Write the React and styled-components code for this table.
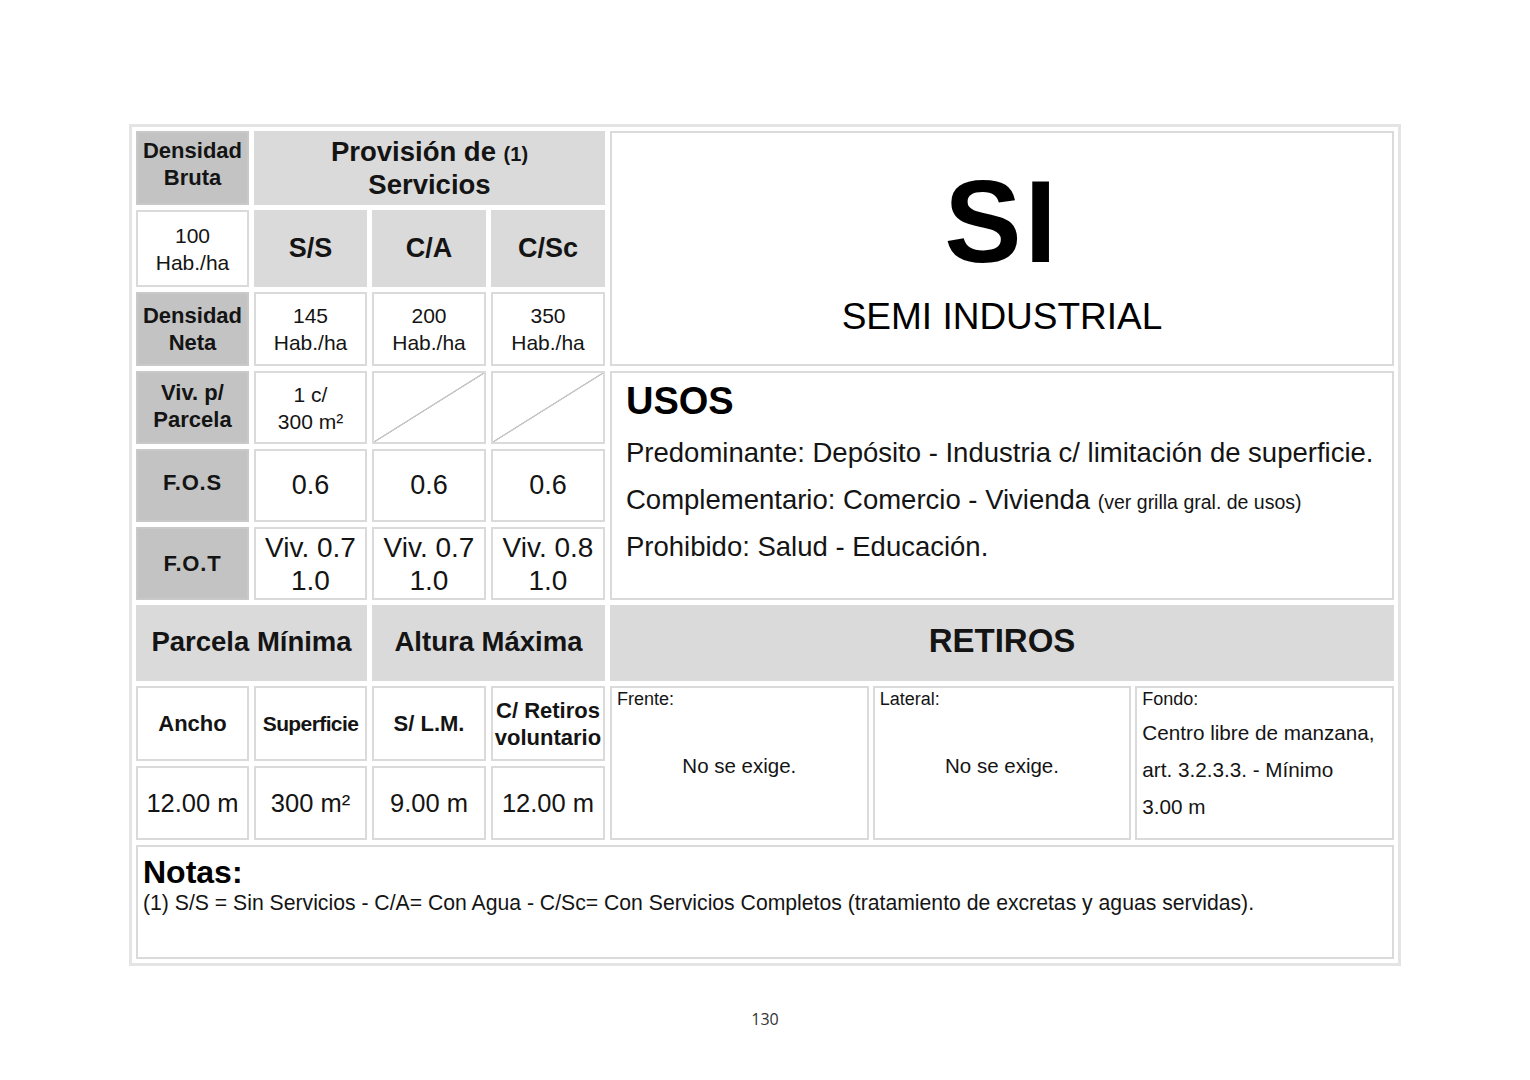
import React from 'react';
import styled, { createGlobalStyle } from 'styled-components';

const GlobalStyle = createGlobalStyle`
  body {
    margin: 0;
    background: #fff;
    font-family: "Liberation Sans", Arial, sans-serif;
    color: #141414;
  }
`

const Page = styled.div`
  width: 1530px;
  height: 1080px;
  padding-top: 124px;
  box-sizing: border-box;
  display: flex;
  flex-direction: column;
  align-items: center;
`

const Frame = styled.div`
  width: 1272px;
  box-sizing: border-box;
  border: 3px solid #e4e4e4;
  padding: 4px;
  display: grid;
  grid-template-columns: 113px 113px 114px 114px 1fr;
  grid-template-rows: 74px 77px 74px 73px 73px 73px 76px 75px 74px 114px;
  gap: 5px;
`

const tones = {
  dark: '#c3c3c3',
  light: '#dadada',
  white: '#ffffff',
}

const Cell = styled.div`
  grid-column: ${p => p.$col || 'auto'};
  grid-row: ${p => p.$row || 'auto'};
  box-sizing: border-box;
  border: 2px solid ${p => (p.$tone === 'dark' ? '#c9c9c9' : '#dadada')};
  background: ${p => tones[p.$tone || 'white']};
  display: flex;
  flex-direction: column;
  align-items: center;
  justify-content: center;
  text-align: center;
  padding-bottom: ${p => p.$lift || 0}px;
  ${p => p.$slash && `
    background: linear-gradient(to bottom right,
      transparent calc(50% - 1px),
      #c6c6c6 calc(50% - 0.5px),
      #c6c6c6 calc(50% + 0.5px),
      transparent calc(50% + 1px));
  `}
`

const Label = styled.div`
  font-weight: bold;
  font-size: ${p => p.$size || 22}px;
  line-height: ${p => p.$lh || 27}px;
  letter-spacing: ${p => p.$spacing || 0}px;
  white-space: nowrap;
`

const Value = styled.div`
  font-size: ${p => p.$size || 21}px;
  line-height: ${p => p.$lh || 27}px;
  white-space: nowrap;
`

const Small = styled.span`
  font-size: ${p => p.$size || 20}px;
  font-weight: ${p => (p.$bold ? 'bold' : 'normal')};
  line-height: 1;
`

const ZoneBox = styled(Cell)`
  padding-top: 6px;
`

const ZoneCode = styled.div`
  font-weight: bold;
  font-size: 116px;
  line-height: 108px;
  letter-spacing: 3px;
  color: #000;
`

const ZoneName = styled.div`
  margin-top: 23px;
  font-size: 37px;
  line-height: 36px;
  color: #000;
`

const UsesBox = styled(Cell)`
  align-items: flex-start;
  justify-content: flex-start;
  text-align: left;
  padding: 8px 14px;
`

const UsesTitle = styled.div`
  font-weight: bold;
  font-size: 38px;
  line-height: 40px;
  color: #000;
`

const UsesList = styled.div`
  margin-top: 8px;
  font-size: 27.5px;
  line-height: 47px;
  white-space: nowrap;
`

const UsesLine = styled.div`
  height: 47px;
`

const RetirosGrid = styled.div`
  grid-column: 5;
  grid-row: 8 / 10;
  display: grid;
  grid-template-columns: repeat(3, 1fr);
  gap: 4px;
`

const RetiroCell = styled.div`
  box-sizing: border-box;
  border: 2px solid #dadada;
  padding: 1px 5px 0;
  display: flex;
  flex-direction: column;
`

const RetiroLabel = styled.div`
  font-size: 18px;
  line-height: 20px;
`

const RetiroBody = styled.div`
  flex: 1;
  display: flex;
  flex-direction: column;
  align-items: ${p => (p.$left ? 'flex-start' : 'center')};
  justify-content: ${p => (p.$left ? 'flex-start' : 'center')};
  padding-bottom: ${p => (p.$left ? 0 : 16)}px;
  margin-top: ${p => (p.$left ? 5 : 0)}px;
  font-size: ${p => (p.$left ? 20.7 : 20.5)}px;
  line-height: ${p => (p.$left ? 37 : 24)}px;
  white-space: nowrap;
`

const NotesBox = styled(Cell)`
  align-items: flex-start;
  justify-content: flex-start;
  text-align: left;
  padding: 7px 5px;
`

const NotesTitle = styled.div`
  font-weight: bold;
  font-size: 32px;
  line-height: 36px;
  color: #000;
`

const NotesText = styled.div`
  font-size: 21.2px;
  line-height: 26px;
  white-space: nowrap;
`

const PageNumber = styled.div`
  margin-top: 44px;
  font-family: "Open Sans", "Liberation Sans", sans-serif;
  font-size: 16px;
  line-height: 18px;
  color: #333;
`

const services = ['S/S', 'C/A', 'C/Sc']
const netas = ['145', '200', '350']
const fot = ['Viv. 0.7', 'Viv. 0.7', 'Viv. 0.8']

export default function App() {
  return (
    <>
      <GlobalStyle />
      <Page>
        <Frame>
          <Cell $tone="dark" $col="1" $row="1" $lift={8}>
            <Label>Densidad<br />Bruta</Label>
          </Cell>
          <Cell $tone="light" $col="2 / 5" $row="1">
            <Label $size={27.5} $lh={33}>Provisión de <Small $bold>(1)</Small><br />Servicios</Label>
          </Cell>
          <ZoneBox $col="5" $row="1 / 4">
            <ZoneCode>SI</ZoneCode>
            <ZoneName>SEMI INDUSTRIAL</ZoneName>
          </ZoneBox>

          <Cell $col="1" $row="2">
            <Value>100<br />Hab./ha</Value>
          </Cell>
          {services.map(s => (
            <Cell key={s} $tone="light" $row="2">
              <Label $size={27}>{s}</Label>
            </Cell>
          ))}

          <Cell $tone="dark" $col="1" $row="3">
            <Label>Densidad<br />Neta</Label>
          </Cell>
          {netas.map(n => (
            <Cell key={n} $row="3">
              <Value>{n}<br />Hab./ha</Value>
            </Cell>
          ))}

          <Cell $tone="dark" $col="1" $row="4" $lift={4}>
            <Label>Viv. p/<br />Parcela</Label>
          </Cell>
          <Cell $row="4">
            <Value>1 c/<br />300 m²</Value>
          </Cell>
          <Cell $row="4" $slash />
          <Cell $row="4" $slash />

          <UsesBox $col="5" $row="4 / 7">
            <UsesTitle>USOS</UsesTitle>
            <UsesList>
              <UsesLine>Predominante: Depósito - Industria c/ limitación de superficie.</UsesLine>
              <UsesLine>Complementario: Comercio - Vivienda <Small $size={19.5}>(ver grilla gral. de usos)</Small></UsesLine>
              <UsesLine>Prohibido: Salud - Educación.</UsesLine>
            </UsesList>
          </UsesBox>

          <Cell $tone="dark" $col="1" $row="5" $lift={6}>
            <Label $spacing={0.8}>F.O.S</Label>
          </Cell>
          {[0, 1, 2].map(i => (
            <Cell key={i} $row="5">
              <Value $size={27}>0.6</Value>
            </Cell>
          ))}

          <Cell $tone="dark" $col="1" $row="6">
            <Label $spacing={0.8}>F.O.T</Label>
          </Cell>
          {fot.map((f, i) => (
            <Cell key={i} $row="6">
              <Value $size={28} $lh={33}>{f}<br />1.0</Value>
            </Cell>
          ))}

          <Cell $tone="light" $col="1 / 3" $row="7" $lift={4}>
            <Label $size={27.5}>Parcela Mínima</Label>
          </Cell>
          <Cell $tone="light" $col="3 / 5" $row="7" $lift={4}>
            <Label $size={27.5}>Altura Máxima</Label>
          </Cell>
          <Cell $tone="light" $col="5" $row="7" $lift={4}>
            <Label $size={33} $lh={38}>RETIROS</Label>
          </Cell>

          <Cell $row="8"><Label>Ancho</Label></Cell>
          <Cell $row="8"><Label $size={21} $spacing={-0.6}>Superficie</Label></Cell>
          <Cell $row="8"><Label>S/ L.M.</Label></Cell>
          <Cell $row="8"><Label>C/ Retiros<br />voluntario</Label></Cell>

          <RetirosGrid>
            <RetiroCell>
              <RetiroLabel>Frente:</RetiroLabel>
              <RetiroBody>No se exige.</RetiroBody>
            </RetiroCell>
            <RetiroCell>
              <RetiroLabel>Lateral:</RetiroLabel>
              <RetiroBody>No se exige.</RetiroBody>
            </RetiroCell>
            <RetiroCell>
              <RetiroLabel>Fondo:</RetiroLabel>
              <RetiroBody $left>
                <div>Centro libre de manzana,</div>
                <div>art. 3.2.3.3. - Mínimo</div>
                <div>3.00 m</div>
              </RetiroBody>
            </RetiroCell>
          </RetirosGrid>

          <Cell $row="9"><Value $size={25.5}>12.00 m</Value></Cell>
          <Cell $row="9"><Value $size={25.5}>300 m²</Value></Cell>
          <Cell $row="9"><Value $size={25.5}>9.00 m</Value></Cell>
          <Cell $row="9"><Value $size={25.5}>12.00 m</Value></Cell>

          <NotesBox $col="1 / 6" $row="10">
            <NotesTitle>Notas:</NotesTitle>
            <NotesText>
              (1) S/S = Sin Servicios - C/A= Con Agua - C/Sc= Con Servicios Completos (tratamiento de excretas y aguas servidas).
            </NotesText>
          </NotesBox>
        </Frame>
        <PageNumber>130</PageNumber>
      </Page>
    </>
  )
}
